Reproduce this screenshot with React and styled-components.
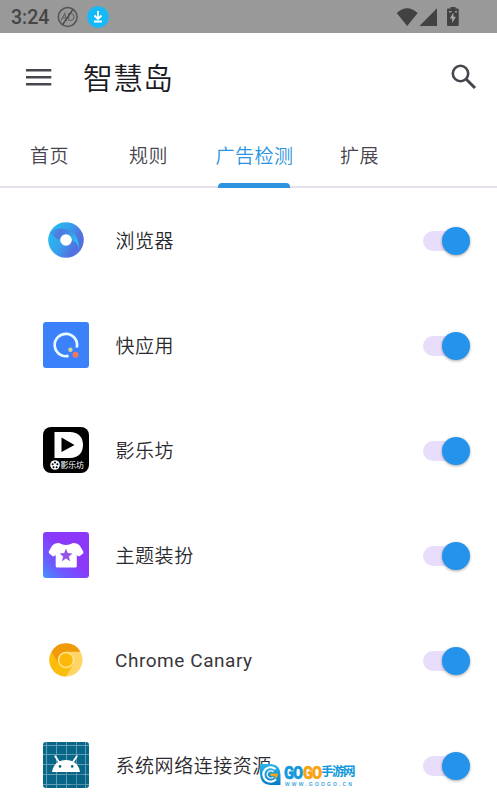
import React from 'react';
import styled, { createGlobalStyle } from 'styled-components';

const GlobalStyle = createGlobalStyle`
  * { box-sizing: border-box; }
  body {
    margin: 0;
    background: #fff;
    font-family: Roboto, 'Noto Sans CJK SC', sans-serif;
    overflow: hidden;
  }
`;

const Screen = styled.div`
  position: relative;
  width: 497px;
  height: 795px;
  background: #fff;
  overflow: hidden;
`;

const StatusBar = styled.div`
  display: flex;
  align-items: center;
  height: 33px;
  padding: 0 37px 0 11px;
  background: #999;
  color: #454545;
`;

const Clock = styled.span`
  width: 46px;
  font-size: 19.5px;
  font-weight: 500;
  line-height: 33px;
  padding-top: 1px;
`;

const StatusIcons = styled.div`
  display: flex;
  align-items: center;
  margin-left: auto;
`;

const Toolbar = styled.header`
  display: flex;
  align-items: center;
  height: 88px;
  padding: 0 20px 0 26px;
`;

const Title = styled.h1`
  flex: 1;
  margin: 0 0 0 31px;
  font-size: 30px;
  font-weight: 350;
  line-height: 40px;
  color: #1c1b1f;
  padding-top: 4px;
`;

const Tabs = styled.nav`
  display: grid;
  grid-template-columns: 99px 99px 113px 97px;
  height: 67px;
  border-bottom: 2px solid #e7e0ec;
`;

const Tab = styled.div`
  display: flex;
  flex-direction: column;
  align-items: center;
  height: 67px;
  padding-top: 21px;
  font-size: 19px;
  font-weight: 350;
  line-height: 30px;
  letter-spacing: 0.5px;
  color: ${p => (p.$active ? '#2b93e0' : '#49454f')};
`;

const Indicator = styled.span`
  width: 72px;
  height: 5px;
  margin-top: auto;
  margin-right: 1px;
  border-radius: 4px 4px 0 0;
  background: #2b93e0;
`;

const Row = styled.div`
  display: flex;
  align-items: center;
  height: 105px;
  padding: 0 27px 0 43px;
`;

const AppIcon = styled.svg`
  width: 46px;
  height: 46px;
  margin-bottom: 1px;
  flex: none;
  display: block;
`;

const AppName = styled.span`
  flex: 1;
  margin-left: ${p => (p.$latin ? '26px' : '26.5px')};
  padding-top: ${p => (p.$latin ? '1px' : '3px')};
  font-size: 19px;
  font-weight: ${p => (p.$latin ? 400 : 350)};
  line-height: 28px;
  letter-spacing: 0.55px;
  color: ${p => (p.$latin ? '#38373b' : '#2a292d')};
  white-space: nowrap;
`;

const Track = styled.span`
  display: flex;
  align-items: center;
  justify-content: flex-end;
  width: 47px;
  height: 20px;
  border-radius: 10px;
  background: #e8ddfb;
`;

const Thumb = styled.span`
  width: 28px;
  height: 28px;
  border-radius: 50%;
  background: #2393ec;
  box-shadow: 0 1px 3px rgba(0, 0, 0, 0.35);
`;

const Watermark = styled.div`
  position: absolute;
  left: 259px;
  top: 763px;
  display: flex;
  align-items: flex-start;
  gap: 3px;
`;

const MarkText = styled.div`
  display: flex;
  flex-direction: column;
`;

const MarkName = styled.div`
  display: flex;
  align-items: center;
  height: 17px;
  margin-top: 1px;
  font-family: 'Liberation Sans', 'Noto Sans CJK SC', sans-serif;
  font-weight: 700;
  color: #1298dc;
`;

const MarkLatin = styled.span`
  width: 18.5px;
  font-family: Roboto, sans-serif;
  font-size: 18px;
  font-weight: 900;
  line-height: 17px;
  letter-spacing: -1.2px;
  transform: scaleX(0.81);
  transform-origin: left;
  -webkit-text-stroke: 0.5px currentColor;
  color: ${p => p.$color};
`;

const MarkCjk = styled.span`
  font-size: 12.5px;
  line-height: 17px;
  letter-spacing: -1.5px;
  white-space: nowrap;
`;

const MarkUrl = styled.div`
  padding-left: 1px;
  font-family: 'Liberation Sans', sans-serif;
  font-size: 5px;
  font-weight: 700;
  line-height: 6px;
  letter-spacing: 2.15px;
  white-space: nowrap;
  color: #3fa7dd;
`;

const BrowserIcon = () => (
  <AppIcon viewBox="0 0 46 46">
    <defs>
      <linearGradient id="ringA" x1="0" y1="0.3" x2="1" y2="0.8">
        <stop offset="0" stopColor="#25bcf0" />
        <stop offset="0.4" stopColor="#35a2ec" />
        <stop offset="0.75" stopColor="#5470e0" />
      </linearGradient>
      <linearGradient id="ringB" x1="0" y1="0.2" x2="1" y2="0.55">
        <stop offset="0" stopColor="#3a9cea" />
        <stop offset="0.3" stopColor="#5078df" />
        <stop offset="0.55" stopColor="#4589e6" />
        <stop offset="0.9" stopColor="#25c0ed" />
      </linearGradient>
    </defs>
    <circle cx="23" cy="23" r="17.8" fill="url(#ringA)" />
    <path d="M7 15.2A17.8 17.8 0 0 1 34 37C37 31 35 26 29 23L17 23C12 21 9 19 7 15.2Z" fill="url(#ringB)" />
    <circle cx="23" cy="23" r="5.8" fill="#fff" />
  </AppIcon>
);

const QuickIcon = () => (
  <AppIcon viewBox="0 0 46 46">
    <rect width="46" height="46" rx="3" fill="#3b82fa" />
    <path d="M25.5 33.9A11.2 11.2 0 1 1 33.8 25.5" fill="none" stroke="#e9fbff" strokeWidth="2.7" />
    <circle cx="27.4" cy="27.8" r="2.2" fill="#d9cf97" />
    <circle cx="32.5" cy="32.8" r="3" fill="#ef765f" />
  </AppIcon>
);

const VideoIcon = () => (
  <AppIcon viewBox="0 0 46 46">
    <rect width="46" height="46" rx="8" fill="#000" />
    <path d="M11.5 5H27C35 5 40 10 40 18S35 31 27 31H11.5Z" fill="#fff" />
    <path d="M18.5 10.5L31.5 18L18.5 25Z" fill="#000" />
    <circle cx="12" cy="38" r="4.8" fill="#fff" />
    <g fill="#000">
      <circle cx="12" cy="35.4" r="1" />
      <circle cx="9.6" cy="37.2" r="1" />
      <circle cx="14.4" cy="37.2" r="1" />
      <circle cx="10.5" cy="40.2" r="1" />
      <circle cx="13.6" cy="40.2" r="1" />
    </g>
    <text x="17.6" y="41" fontSize="8" fontFamily="'Noto Sans CJK SC', sans-serif" fill="#fff" textLength="23.5">影乐坊</text>
  </AppIcon>
);

const ThemeIcon = () => (
  <AppIcon viewBox="0 0 46 46">
    <defs>
      <linearGradient id="theme" x1="0" y1="1" x2="0.55" y2="0.45">
        <stop offset="0" stopColor="#4295ff" />
        <stop offset="0.45" stopColor="#6b5cff" />
        <stop offset="1" stopColor="#8b38fb" />
      </linearGradient>
    </defs>
    <rect width="46" height="46" rx="3" fill="url(#theme)" />
    <path d="M16 11Q23 15 30 11Q35 11 37 14L40.3 19.5Q40.8 21 39.5 22L36 24.6L33.8 23.3V34Q33.8 35.5 32.3 35.5H14.2Q12.7 35.5 12.7 34V23.3L10 24.6L6.3 21.5Q5.2 20.3 6 19L9 14Q11 11 16 11Z" fill="#fff" />
    <path d="M23 16.5L24.8 21.1L29.5 21.4L25.9 24.4L27.1 29.2L23 26.5L18.9 29.2L20.1 24.4L16.5 21.4L21.2 21.1Z" fill="#9556e8" />
  </AppIcon>
);

const CanaryIcon = () => (
  <AppIcon viewBox="0 0 46 46">
    <circle cx="23" cy="23" r="16.6" fill="#ffd565" />
    <path d="M8.6 14.7A16.6 16.6 0 0 0 23 39.6L30.5 27L16 27Z" fill="#fbbc0c" />
    <path d="M8.6 14.7A16.6 16.6 0 0 1 37.4 14.7H23L15.5 27Z" fill="#f09a09" />
    <circle cx="23" cy="23" r="8.3" fill="#ffe58e" />
    <circle cx="23" cy="23" r="6.8" fill="#fcb80b" />
  </AppIcon>
);

const AndroidIcon = () => (
  <AppIcon viewBox="0 0 46 46">
    <rect width="46" height="46" rx="3" fill="#086789" />
    <path d="M3.5 0V46M13.5 0V46M23.5 0V46M33.5 0V46M42.5 0V46M0 3.5H46M0 12.5H46M0 22.5H46M0 32.5H46M0 42.5H46" stroke="#649eb4" strokeWidth="1" />
    <path d="M22 31L37 29L43 35V44L39 46H30Z" fill="#05546f" opacity="0.2" />
    <path d="M12.2 14.3L16 20M33.8 14.3L30 20" stroke="#fff" strokeWidth="1.8" strokeLinecap="round" />
    <path d="M9 30C10 22 16 18 23 18S36 22 37 30Z" fill="#fff" />
    <circle cx="17" cy="24.4" r="1.3" fill="#086789" />
    <circle cx="29.2" cy="24.4" r="1.3" fill="#086789" />
  </AppIcon>
);

const apps = [
  { name: '浏览器', Icon: BrowserIcon },
  { name: '快应用', Icon: QuickIcon },
  { name: '影乐坊', Icon: VideoIcon },
  { name: '主题装扮', Icon: ThemeIcon },
  { name: 'Chrome Canary', Icon: CanaryIcon, latin: true },
  { name: '系统网络连接资源', Icon: AndroidIcon },
];

const tabs = ['首页', '规则', '广告检测', '扩展'];

export default function App() {
  return (
    <Screen>
      <GlobalStyle />
      <StatusBar>
        <Clock>3:24</Clock>
        <svg width="54" height="22" viewBox="0 0 54 22">
          <circle cx="10.7" cy="11" r="9.4" fill="none" stroke="#555" strokeWidth="1.5" />
          <path d="M4 14.5L7.8 7.5L9.5 14.5M5.5 12H9M11.8 7.5V14.5H13.5Q17 14 17 11T13.5 7.5Z" fill="none" stroke="#666" strokeWidth="1.2" />
          <path d="M15.8 3.6L5.8 18.4" stroke="#4b4b4b" strokeWidth="1.6" />
          <circle cx="41" cy="11" r="10.8" fill="#16b9f7" />
          <path d="M41 5V12.5M37.5 9.5L41 13L44.5 9.5M37 15.5H45" fill="none" stroke="#fff" strokeWidth="1.8" />
        </svg>
        <StatusIcons>
          <svg width="64" height="22" viewBox="396 5 64 22" fill="#424242">
            <path d="M396.7 12Q407 2.6 417.7 12L407.2 25Z" />
            <path d="M437 7.2V25H419.5Z" />
            <path d="M450.5 6H455.5V7.5H457.5Q458.7 7.5 458.7 8.8V23.8Q458.7 25 457.5 25H448.3Q447 25 447 23.8V8.8Q447 7.5 448.3 7.5H450.5Z" />
            <path d="M449 10H451.5V11.5H449ZM455 10H457V11.5H455Z" fill="#999" />
            <path d="M453.4 11.5L449.9 17.4H452.2V22L455.8 15.8H453.4Z" fill="#aaa" />
          </svg>
        </StatusIcons>
      </StatusBar>

      <Toolbar>
        <svg width="26" height="20" viewBox="0 0 26 20">
          <path d="M0 3.3H25.3M0 10.2H25.3M0 17.2H25.3" stroke="#49454f" strokeWidth="2.5" />
        </svg>
        <Title>智慧岛</Title>
        <svg width="26" height="26" viewBox="0 0 26 26" fill="none" stroke="#49454f">
          <circle cx="9.5" cy="9.5" r="7.7" strokeWidth="2.6" />
          <path d="M15 15L24 24" strokeWidth="3" />
        </svg>
      </Toolbar>

      <Tabs>
        {tabs.map((tab, i) => (
          <Tab key={tab} $active={i === 2}>
            {tab}
            {i === 2 && <Indicator />}
          </Tab>
        ))}
      </Tabs>

      <main>
        {apps.map(({ name, Icon, latin }) => (
          <Row key={name}>
            <Icon />
            <AppName $latin={latin}>{name}</AppName>
            <Track>
              <Thumb />
            </Track>
          </Row>
        ))}
      </main>

      <Watermark>
        <svg width="22" height="23" viewBox="0 0 22 23">
          <defs>
            <linearGradient id="mark" x1="0" y1="0" x2="0" y2="1">
              <stop offset="0" stopColor="#2bb6ea" />
              <stop offset="1" stopColor="#087ac6" />
            </linearGradient>
          </defs>
          <path d="M1 1H12Q21.5 2 21.5 11.5V22H11Q1 21 1 11Z" fill="url(#mark)" />
          <path d="M16.5 6.2A7.2 7.2 0 1 0 17 16.2" fill="none" stroke="#fff" strokeWidth="2.2" />
          <path d="M14.5 8.8A3.7 3.7 0 1 0 14.5 14" fill="none" stroke="#d8f1fb" strokeWidth="1.4" />
          <path d="M11.5 10.5H19Q19 14 16.5 15.5L15.5 13H11.5Z" fill="#f6a31c" />
        </svg>
        <MarkText>
          <MarkName>
            <MarkLatin $color="#1298dc">GO</MarkLatin>
            <MarkLatin $color="#f8a20f">GO</MarkLatin>
            <MarkCjk>手游网</MarkCjk>
          </MarkName>
          <MarkUrl>WWW.GOOGO.CN</MarkUrl>
        </MarkText>
      </Watermark>
    </Screen>
  );
}
